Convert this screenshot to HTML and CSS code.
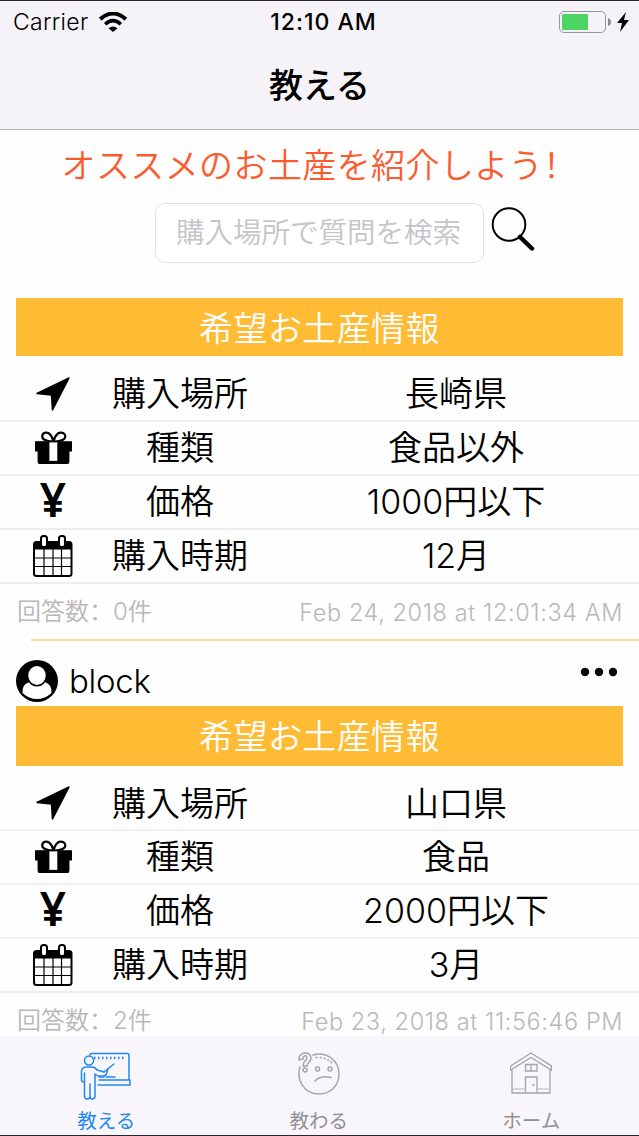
FILE: index.html
```html
<!DOCTYPE html>
<html lang="ja">
<head>
    <meta charset="UTF-8" />
    <meta name="viewport" content="width=device-width, initial-scale=1.0" />
    <title>教える</title>
    <link rel="stylesheet" href="styles.css">
</head>
<body>

<!-- Shared icons -->
<svg class="sprite" width="0" height="0">
    <symbol id="arrow" viewBox="0 0 34 34">
        <path d="M33 1L16.5 33L15.5 18L1 16.5Z" fill="#000" stroke="#000" stroke-width="1.5" stroke-linejoin="round"/>
    </symbol>
    <symbol id="gift" viewBox="0 0 36 32">
        <path d="M18 10.500C14 10 7 9.500 7 5.500C7 2 9.500 1.300 11.500 1.600C15 2 17 6.500 18 10C19 6.500 21 2 24.500 1.600C27 1.300 29.500 2.500 29.500 5.500C29.500 9.500 22 10 18 10.500Z" fill="#fff" stroke="#000" stroke-width="2.200"/>
        <path d="M.5 10.500H35.500V19.500H33V29.500Q33 31.500 31 31.500H5Q3 31.500 3 29.500V19.500H.5Z" stroke="#000" stroke-width="1" stroke-linejoin="round"/>
        <path d="M14 11H21.700V29H14Z" fill="#fff"/>
    </symbol>
    <symbol id="calendar" viewBox="0 0 40 42">
        <rect x="1" y="7" width="37.500" height="34" rx="2.500" fill="#fff" stroke="#000" stroke-width="2"/>
        <path d="M1 8Q1 7 3 7H36.500Q38.500 7 38.500 8V14.500H1Z"/>
        <path d="M11 14V41M20 14V41M28.500 14V41M2 23H38M2 31.500H38" stroke="#000" stroke-width="1.200"/>
        <rect x="8" y="1" width="6" height="11" rx="2.500" fill="#fff" stroke="#000" stroke-width="2"/>
        <rect x="26" y="1" width="6" height="11" rx="2.500" fill="#fff" stroke="#000" stroke-width="2"/>
    </symbol>
</svg>

<header class="header">
    <div class="status">
        <div class="status-left">
            <span>Carrier</span>
            <svg width="28" height="20" viewBox="0 0 28 20" fill="none" stroke="#000">
                <path d="M1.200 7.200Q14 -4.200 26.800 7.200" stroke-width="4"/>
                <path d="M6.200 12.200Q14 5 21.800 12.200" stroke-width="3.600"/>
                <path d="M9.500 16.200Q14 12.600 18.500 16.200L14 20Z" fill="#000" stroke="none"/>
            </svg>
        </div>
        <div class="status-time">12:10 AM</div>
        <div class="status-right">
            <div class="battery"><div class="battery-level"></div></div>
            <svg width="3" height="8" viewBox="0 0 3 8"><path d="M0 0Q3 1 3 4T0 8Z" fill="#8b8a8c"/></svg>
            <svg class="bolt" width="12" height="20" viewBox="0 0 12 20"><path d="M9 0L0 11H5L3 20L12 8H7Z"/></svg>
        </div>
    </div>
    <h1>教える</h1>
</header>

<main class="content">
    <h2>オススメのお土産を紹介しよう<span class="mark" lang="zh-CN">！</span></h2>
    <div class="search">
        <input type="text" placeholder="購入場所で質問を検索">
        <svg width="44" height="46" viewBox="0 0 44 46" fill="none" stroke="#000">
            <circle cx="18" cy="18.500" r="16.300" stroke-width="2"/>
            <path d="M29 31L41 42.500" stroke-width="4.500" stroke-linecap="round"/>
        </svg>
    </div>

    <section class="card">
        <h3>希望お土産情報</h3>
        <div class="row"><div class="icon"><svg width="34" height="34"><use href="#arrow"/></svg></div><div class="label">購入場所</div><div class="value">長崎県</div></div>
        <div class="row"><div class="icon"><svg width="37" height="33"><use href="#gift"/></svg></div><div class="label">種類</div><div class="value">食品以外</div></div>
        <div class="row"><div class="icon yen">¥</div><div class="label">価格</div><div class="value">1000円以下</div></div>
        <div class="row"><div class="icon"><svg width="40" height="42"><use href="#calendar"/></svg></div><div class="label">購入時期</div><div class="value">12月</div></div>
        <div class="meta"><span>回答数<span class="mark" lang="zh-CN">：</span>0件</span><span class="date">Feb 24, 2018 at 12:01:34 AM</span></div>
    </section>

    <section class="card second">
        <div class="user">
            <svg width="42" height="42" viewBox="0 0 42 42">
                <circle cx="21" cy="21" r="21"/>
                <path d="M6.500 33Q6 24 13.500 22Q21 30 28.500 22Q36 24 35.500 33Q29 39 21 39T6.500 33Z" fill="#fff"/>
                <ellipse cx="21" cy="15.500" rx="9.500" ry="10.200" fill="#fff" stroke="#000" stroke-width="1.500"/>
            </svg>
            <span>block</span>
            <svg class="more" width="38" height="10" viewBox="0 0 38 10"><circle cx="5" cy="5" r="4.200"/><circle cx="19" cy="5" r="4.200"/><circle cx="33" cy="5" r="4.200"/></svg>
        </div>
        <h3>希望お土産情報</h3>
        <div class="row"><div class="icon"><svg width="34" height="34"><use href="#arrow"/></svg></div><div class="label">購入場所</div><div class="value">山口県</div></div>
        <div class="row"><div class="icon"><svg width="37" height="33"><use href="#gift"/></svg></div><div class="label">種類</div><div class="value">食品</div></div>
        <div class="row"><div class="icon yen">¥</div><div class="label">価格</div><div class="value">2000円以下</div></div>
        <div class="row"><div class="icon"><svg width="40" height="42"><use href="#calendar"/></svg></div><div class="label">購入時期</div><div class="value">3月</div></div>
        <div class="meta"><span>回答数<span class="mark" lang="zh-CN">：</span>2件</span><span class="date">Feb 23, 2018 at 11:56:46 PM</span></div>
    </section>
</main>

<nav class="tabs">
    <a class="tab active">
        <svg width="52" height="50" viewBox="0 0 52 50" fill="none" stroke="currentColor" stroke-width="1.500" stroke-linejoin="round" stroke-linecap="round">
            <path d="M10 3Q10 1.500 12 1.500H47Q49 1.500 49 3.500V28M19 28H50V33H18M19 25H24M26 25H35"/>
            <path d="M14 6H46" stroke-width="2.500" stroke-dasharray="1.500 2.500" stroke-linecap="butt"/>
            <circle cx="9" cy="8.500" r="4.500"/>
            <path d="M4 30Q1.500 30 1.500 28V19Q2 15 7 15H12Q15 15 17 18L24 20L34 12M28 17L26 23L24 24H18L15 22V44Q15 47 12 47Q10 47 10 44V32V44Q10 47 7 47Q4.500 47 4.500 44V21"/>
        </svg>
        <span>教える</span>
    </a>
    <a class="tab">
        <svg width="44" height="44" viewBox="0 0 44 44" fill="none" stroke="currentColor" stroke-width="1.500" stroke-linecap="round">
            <path d="M16 3C29 -1 42 8 42 22C42 34 33 42 22 42C7 42 -1 28 3 15"/>
            <path d="M19 5.500Q29 5 35 11" stroke-dasharray="1 3"/>
            <path d="M2 8C1 -1 14 -1 14 6C14 11 10 10 10 14H6C6 8 10 9 10 6C10 3 6 3 6 7L2 8Z"/>
            <circle cx="8" cy="18" r="2"/>
            <circle cx="20.500" cy="17" r="2"/><circle cx="33" cy="17" r="2"/>
            <path d="M18 29Q24 23 34 25.500"/>
        </svg>
        <span>教わる</span>
    </a>
    <a class="tab">
        <svg width="42" height="42" viewBox="0 0 42 42" fill="none" stroke="currentColor" stroke-width="1.300">
            <path d="M.6 14L21 1L41.400 14V18L21 5.500L.6 18ZM2 18V41H40V18M15.500 41V25H27V41M15.500 12.500H27V19H15.500ZM21 12V19"/>
            <path d="M2 37H15M27 37H40" stroke-width=".8"/>
            <circle cx="23.500" cy="33" r=".5"/>
        </svg>
        <span>ホーム</span>
    </a>
</nav>

</body>
</html>
```
FILE: styles.css
```css
* {
    box-sizing: border-box;
}
body {
    margin: 0;
    width: 639px;
    height: 1136px;
    overflow: hidden;
    display: flex;
    flex-direction: column;
    background: #fefefe;
    color: #000;
    font-family: Inter, "Noto Sans CJK JP", sans-serif;
    font-weight: 350;
}
svg {
    display: block;
    flex: none;
}
.sprite {
    position: absolute;
}
h1, h2, h3 {
    margin: 0;
    font-weight: 350;
    text-align: center;
}
.mark {
    font-family: "Noto Sans CJK SC", sans-serif;
    line-height: 0;
}

/* Status and title */
.header {
    flex: none;
    height: 130px;
    background: #f5f3f7;
    border-top: 1px solid #29252b;
    border-bottom: 1px solid #bdbbc0;
}
.status {
    height: 41px;
    padding: 0 10px 0 13px;
    display: grid;
    grid-template-columns: 1fr auto 1fr;
    align-items: center;
    font-size: 23px;
    letter-spacing: .3px;
}
.status-left {
    display: flex;
    align-items: center;
    gap: 11px;
}
.status-time {
    padding-left: 5px;
    font-size: 23px;
    font-weight: 500;
    letter-spacing: 1px;
}
.status-right {
    display: flex;
    align-items: center;
    justify-content: flex-end;
    gap: 2px;
}
.battery {
    width: 47px;
    height: 22px;
    padding: 2px;
    border: 1.5px solid #979599;
    border-radius: 5px;
}
.battery-level {
    width: 26px;
    height: 100%;
    background: #4cd562;
    border-radius: 1px;
}
.bolt {
    margin-left: 4px;
}
h1 {
    font-size: 34px;
    font-weight: 500;
    line-height: 88px;
}

/* Search */
.content {
    flex: 1;
    min-height: 0;
    overflow: hidden;
}
h2 {
    height: 73px;
    line-height: 71px;
    font-size: 34px;
    letter-spacing: .4px;
    color: #fb5c2f;
}
.search {
    display: flex;
    padding-left: 155px;
    gap: 7px;
    height: 95px;
}
.search input {
    width: 329px;
    height: 60px;
    padding: 0 20px 2px;
    border: 1.5px solid #e2e0e6;
    border-radius: 10px;
    background: #fff;
    font: inherit;
    font-size: 28.500px;
}
.search input::placeholder {
    color: #c5c4c9;
    opacity: 1;
}
.search svg {
    margin-top: 3px;
}

/* Question cards */
h3 {
    height: 58px;
    margin: 0 16px;
    background: #ffbb33;
    color: #fff;
    font-size: 34px;
    letter-spacing: .4px;
    line-height: 61px;
}
.row {
    display: grid;
    grid-template-columns: 106px 148px 1fr;
    align-items: center;
    height: 54px;
    border-bottom: 2px solid #eeeef0;
    font-size: 34px;
    line-height: 50px;
    text-align: center;
}
h3 + .row {
    height: 66px;
    padding-top: 12px;
}
.icon {
    display: flex;
    justify-content: center;
    padding-bottom: 1px;
}
.value {
    padding-left: 19px;
}
.yen {
    padding-bottom: 7px;
    font-family: "Noto Sans", sans-serif;
    font-size: 46px;
    font-weight: 600;
    line-height: 44px;
}
.meta {
    display: flex;
    justify-content: space-between;
    align-items: center;
    height: 55px;
    padding: 3px 16px 0 17px;
    color: #b9b7bb;
    font-size: 24px;
    line-height: 24px;
}
.meta > span:first-child {
    padding-bottom: 2px;
}
.date {
    font-size: 23.5px;
    letter-spacing: .6px;
}
.second {
    padding-top: 2px;
    background: linear-gradient(#f8dc9c, #f8dc9c) 31px 0 / 100% 2px no-repeat;
}
.user {
    display: flex;
    height: 65px;
    padding: 19px 21px 0 16px;
    align-items: flex-start;
    gap: 11px;
    font-size: 33px;
    line-height: 43px;
}
.user span {
    letter-spacing: -.3px;
}
.more {
    margin: 7px 0 0 auto;
}
.second h3 {
    height: 60px;
    line-height: 62px;
}
.second .row {
    line-height: 48px;
}
.second h3 + .row {
    height: 65px;
}

/* Bottom navigation */
.tabs {
    flex: none;
    height: 100px;
    display: grid;
    grid-template-columns: repeat(3, 212.5px);
    background: #f8f6fa;
    border-bottom: 1px solid #29252b;
}
.tab {
    display: flex;
    flex-direction: column;
    align-items: center;
    justify-content: space-between;
    padding-top: 16px;
    color: #a6a4a8;
}
.tab span {
    font-size: 19.500px;
    line-height: 27px;
    color: #929095;
    font-weight: 400;
}
.active, .active span {
    color: #2186f5;
}
```
